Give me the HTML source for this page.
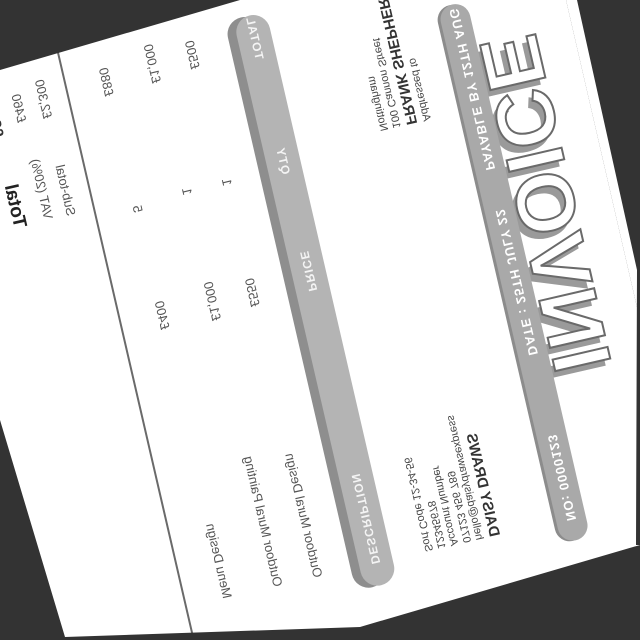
<!DOCTYPE html>
<html><head><meta charset="utf-8">
<style>
html,body{margin:0;padding:0;width:640px;height:640px;overflow:hidden;background:#333;}
#wrap{position:relative;width:640px;height:640px;overflow:hidden;background:#333;}
#page{position:absolute;left:0;top:0;width:900px;height:900px;background:#fff;transform-origin:0 0;
transform:matrix(-0.225,-0.974,-0.974,0.225,694,554);font-family:"Liberation Sans",sans-serif;color:#4a4a4a;}
.ext{position:absolute;background:#fff;}
.a{position:absolute;white-space:nowrap;}
.inv{left:204px;top:22px;font-size:82px;font-weight:bold;line-height:90px;color:#fff;-webkit-text-stroke:2px #6a6a6a;text-shadow:-6px 6px 0 #9a9a9a;letter-spacing:1px;}
.bar{left:40px;top:97px;width:550px;height:30px;border-radius:15px;background:#a9a9a9;box-shadow:0 3px 0 #8c8c8c;}
.bt{color:#fff;font-weight:bold;font-size:13px;line-height:30px;letter-spacing:1px;}
.th{left:40px;top:295px;width:585px;height:34px;border-radius:17px;background:#b4b4b4;box-shadow:0 9px 0 #8e8e8e;}
.ht{color:#f4f4f4;font-weight:bold;font-size:12px;line-height:34px;letter-spacing:1px;}
.r{font-size:13px;line-height:16px;color:#555;}
.s{font-size:11px;line-height:13px;color:#444;}
</style></head><body>
<div id="wrap">
<div id="page">
  <div class="ext" style="left:-200px;top:-200px;width:1100px;height:200px"></div>
  <div class="ext" style="left:-200px;top:0;width:200px;height:900px"></div>
  <div class="a inv">INVOICE</div>
  <div class="a bar"></div>
  <div class="a bt" style="left:60px;top:97px">NO: 0000123</div>
  <div class="a bt" style="left:230px;top:97px">DATE : 25TH JULY 22</div>
  <div class="a bt" style="left:420px;top:97px">PAYABLE BY 12TH AUG</div>

  <div class="a s" style="left:62px;top:182px">
    <div style="font-weight:bold;font-size:15px;line-height:18px;color:#333">DAISY DRAWS</div>
    <div>hello@daisydrawsexpress</div>
    <div>07123 456 789</div>
    <div>Account Number</div>
    <div>12345678</div>
    <div>Sort Code 12-34-56</div>
  </div>
  <div class="a s" style="left:482px;top:157px">
    <div>Addressed to</div>
    <div style="font-weight:bold;font-size:15px;line-height:18px;color:#333">FRANK SHEPHERD</div>
    <div>100 Cannon Street</div>
    <div>Nottingham</div>
  </div>

  <div class="a th"></div>
  <div class="a ht" style="left:62px;top:295px">DESCRIPTION</div>
  <div class="a ht" style="left:342px;top:295px">PRICE</div>
  <div class="a ht" style="left:462px;top:295px">QTY</div>
  <div class="a ht" style="left:580px;top:295px">TOTAL</div>

  <div class="a r" style="left:62px;top:364px">Outdoor Mural Design</div>
  <div class="a r" style="left:62px;top:405px">Outdoor Mural Painting</div>
  <div class="a r" style="left:62px;top:457px">Menu Design</div>
  <div class="a r" style="left:340px;top:364px">£550</div>
  <div class="a r" style="left:335px;top:405px">£1,000</div>
  <div class="a r" style="left:338px;top:457px">£400</div>
  <div class="a r" style="left:464px;top:364px">1</div>
  <div class="a r" style="left:464px;top:405px">1</div>
  <div class="a r" style="left:458px;top:457px">5</div>
  <div class="a r" style="left:585px;top:369px">£500</div>
  <div class="a r" style="left:580px;top:410px">£1,000</div>
  <div class="a r" style="left:578px;top:459px">£880</div>

  <div class="a" style="left:-100px;top:506px;width:1000px;height:2px;background:#6a6a6a"></div>

  <div class="a r" style="left:470px;top:523px">Sub-total</div>
  <div class="a r" style="left:472px;top:546px">VAT (20%)</div>
  <div class="a" style="left:470px;top:573px;font-size:19px;font-weight:bold;color:#222">Total</div>
  <div class="a r" style="left:570px;top:524px">£2,300</div>
  <div class="a r" style="left:572px;top:550px">£460</div>
  <div class="a" style="left:562px;top:575px;font-size:17px;font-weight:bold;color:#333">£2,760</div>
</div>
<svg width="640" height="640" style="position:absolute;left:0;top:0">
  <polygon points="0,0 240,0 0,70" fill="#333"/>
  <polygon points="577,0 640,0 640,545 636,545 637,270" fill="#333"/>
  <polygon points="0,420 65,637 360,627 640,545 640,640 0,640" fill="#333"/>
</svg>
</div>
</body></html>
